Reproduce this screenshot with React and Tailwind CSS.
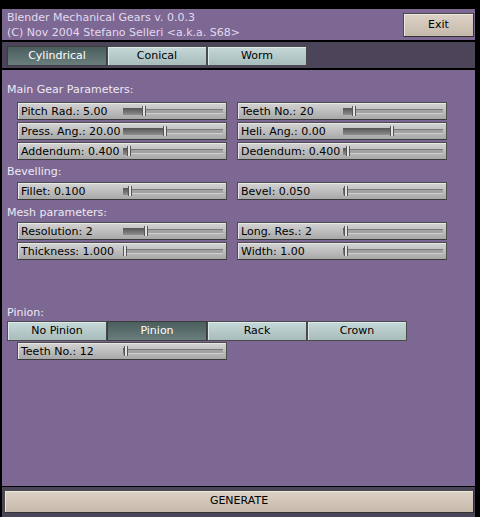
import React from 'react';

const mainGear = [
  { label: 'Pitch Rad.: 5.00', frac: 0.2 },
  { label: 'Teeth No.: 20', frac: 0.1 },
  { label: 'Press. Ang.: 20.00', frac: 0.41 },
  { label: 'Heli. Ang.: 0.00', frac: 0.48 },
  { label: 'Addendum: 0.400', frac: 0.05 },
  { label: 'Dedendum: 0.400', frac: 0.04 },
];

const bevelling = [
  { label: 'Fillet: 0.100', frac: 0.06 },
  { label: 'Bevel: 0.050', frac: 0.02 },
];

const mesh = [
  { label: 'Resolution: 2', frac: 0.22 },
  { label: 'Long. Res.: 2', frac: 0.02 },
  { label: 'Thickness: 1.000', frac: 0.0 },
  { label: 'Width: 1.00', frac: 0.02 },
];

const Slider = ({ label, frac }) => (
  <div className="flex h-[18px] w-[210px] items-center border border-[#4d4d4d] border-b-[#3a3a3a] bg-gradient-to-b from-[#d4d4d4] to-[#a8a8a8] pl-[3px] text-black shadow-[inset_1px_1px_0_#e8e8e8]">
    <span className="w-[102px] shrink-0 whitespace-nowrap leading-[13px]">{label}</span>
    <div className="relative h-[10px] w-[100px] shrink-0">
      {/* groove */}
      <div className="absolute left-0 right-0 top-[3px] h-[5px] border-t border-[#7a7a7a] border-b border-b-[#cfcfcf] bg-[#a2a2a2]" />
      {/* filled part */}
      <div
        className="absolute left-0 top-[2px] h-[7px] bg-gradient-to-b from-[#555555] to-[#8e8e8e]"
        style={{ width: `${frac * 100}px` }}
      />
      {/* handle */}
      <div
        className="absolute top-0 h-[10px] w-[4px] border-x border-[#555555] bg-[#e2e2e2]"
        style={{ left: `${Math.max(frac * 100 - 1, 0)}px` }}
      />
    </div>
  </div>
);

const Tab = ({ label, active }) => (
  <div
    className={
      active
        ? 'flex h-[20px] w-[100px] items-center justify-center border border-[#3c3c3c] bg-gradient-to-b from-[#4a5e5e] to-[#6a7e7e] text-white'
        : 'flex h-[20px] w-[100px] items-center justify-center border border-[#4a4a4a] bg-gradient-to-b from-[#c6d8d8] to-[#a8bcbc] text-black shadow-[inset_1px_1px_0_#dfeaea]'
    }
  >
    {label}
  </div>
);

const SectionLabel = ({ children, className }) => (
  <div className={`leading-[13px] text-[#eee8f4] ${className}`}>{children}</div>
);

const App = () => {
  return (
    <div
      className="flex h-[517px] w-[480px] flex-col bg-black text-[11px]"
      style={{ fontFamily: '"DejaVu Sans", sans-serif' }}
    >
      {/* header */}
      <div className="ml-[2px] mt-[9px] flex h-[31px] w-[473px] justify-between bg-[#7c6893]">
        <div className="pl-[5px] pt-[1px] leading-[15px] text-[#e2daee]">
          <div>Blender Mechanical Gears v. 0.0.3</div>
          <div>(C) Nov 2004 Stefano Selleri &lt;a.k.a. S68&gt;</div>
        </div>
        <button className="mr-[1px] mt-[4px] flex h-[24px] w-[71px] items-center justify-center border border-[#4a4a4a] border-b-[#333] border-r-[#333] bg-gradient-to-b from-[#ddd2c6] to-[#c6b9ac] text-black shadow-[inset_1px_1px_0_#eee6dc]">
          Exit
        </button>
      </div>

      {/* gear type tabs */}
      <div className="ml-[2px] mt-[2px] flex h-[26px] w-[473px] bg-[#4c4559] pl-[5px] pt-[4px]">
        <Tab label="Cylindrical" active />
        <Tab label="Conical" />
        <Tab label="Worm" />
      </div>

      {/* main panel */}
      <div className="ml-[2px] mt-[2px] flex h-[416px] w-[473px] flex-col bg-[#7c6893] pl-[5px]">
        <SectionLabel className="mt-[13px]">Main Gear Parameters:</SectionLabel>
        <div className="ml-[10px] mt-[6px] grid grid-cols-[210px_210px] gap-x-[10px] gap-y-[2px]">
          {mainGear.map((s) => (
            <Slider key={s.label} {...s} />
          ))}
        </div>

        <SectionLabel className="mt-[5px]">Bevelling:</SectionLabel>
        <div className="ml-[10px] mt-[4px] grid grid-cols-[210px_210px] gap-x-[10px] gap-y-[2px]">
          {bevelling.map((s) => (
            <Slider key={s.label} {...s} />
          ))}
        </div>

        <SectionLabel className="mt-[6px]">Mesh parameters:</SectionLabel>
        <div className="ml-[10px] mt-[3px] grid grid-cols-[210px_210px] gap-x-[10px] gap-y-[2px]">
          {mesh.map((s) => (
            <Slider key={s.label} {...s} />
          ))}
        </div>

        <SectionLabel className="mt-[46px]">Pinion:</SectionLabel>
        <div className="mt-[2px] flex">
          <Tab label="No Pinion" />
          <Tab label="Pinion" active />
          <Tab label="Rack" />
          <Tab label="Crown" />
        </div>
        <div className="ml-[10px] mt-[1px]">
          <Slider label="Teeth No.: 12" frac={0.02} />
        </div>
      </div>

      {/* bottom bar */}
      <div className="ml-[2px] mt-[1px] flex-1 w-[473px] bg-[#4c4559] pl-[2px] pt-[3px]">
        <button className="flex h-[23px] w-[470px] items-center justify-center border border-[#4a4a4a] border-b-[#333] border-r-[#333] bg-gradient-to-b from-[#ddd2c6] to-[#c6b9ac] text-black shadow-[inset_1px_1px_0_#eee6dc]">
          GENERATE
        </button>
      </div>
    </div>
  );
};

export default App;
